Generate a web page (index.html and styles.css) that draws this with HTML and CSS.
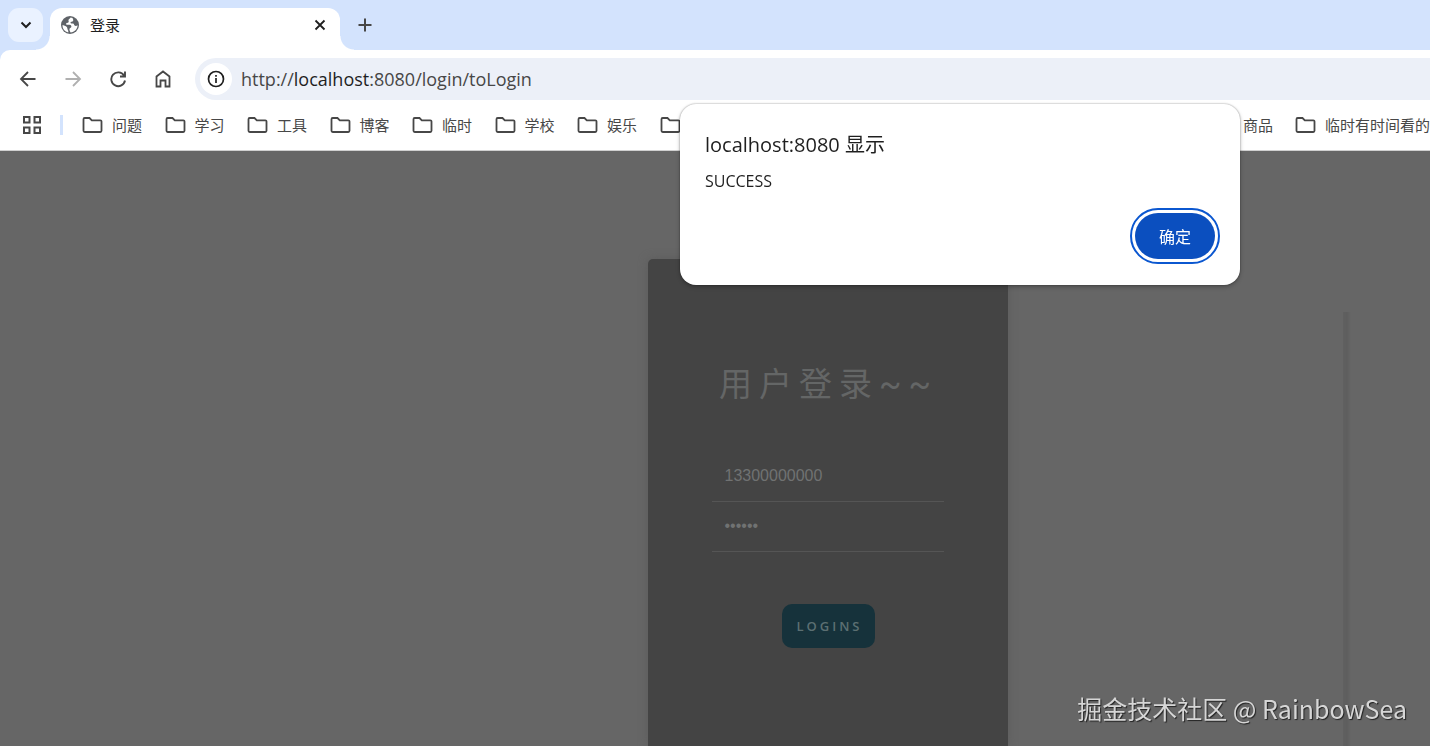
FILE: index.html
```html
<!DOCTYPE html>
<html lang="zh-CN">
<head>
    <meta charset="UTF-8">
    <meta name="viewport" content="width=device-width, initial-scale=1.0">
    <title>登录</title>
    <link rel="stylesheet" href="styles.css">
</head>
<body>
    <!-- shared icons -->
    <svg class="sprite" aria-hidden="true">
        <symbol id="folder" viewBox="0 0 21 18">
            <path d="M1.5 3.2a1.2 1.2 0 0 1 1.2-1.2h4.800l2.300 2.300h8.500a1.200 1.200 0 0 1 1.200 1.200v9.300a1.200 1.200 0 0 1-1.200 1.200H2.700a1.200 1.200 0 0 1-1.200-1.200z" fill="none" stroke="#474747" stroke-width="1.8"/>
        </symbol>
    </svg>

    <header class="browser">
        <div class="tab-strip">
            <button class="tab-search" aria-label="搜索标签页">
                <svg width="12" height="8" viewBox="0 0 12 8"><path d="M1.5 1.5L6 6l4.5-4.5" fill="none" stroke="#1f1f1f" stroke-width="2"/></svg>
            </button>
            <div class="tab">
                <svg width="20" height="20" viewBox="0 0 20 20">
                    <circle cx="10" cy="10" r="9" fill="#5f6368"/>
                    <path d="M10.6 2.4c-.5 1.5-1.8 1.3-2.1 2.5-.2 1 .7 1.7-.2 2.5-.8.6-1.6.2-2.1 1-.5.9.4 1.5 1.5 1.4 1.7-.1 3.6.1 3.7 1.6.1 1.3-1.5 1.2-1.9 2.3-.3 1 .3 2.5 1.1 3.9 3.8-.3 6.9-3.5 7-7.3-1 .8-2.2 1-3 .3-.7-.7-.5-1.7-1.6-2-1.1-.2-2.3.2-2.5-.9-.2-1.2 2.2-.7 2.7-1.9.3-.8-.2-2.1-.7-2.9a7.6 7.6 0 0 0-1.9-.5z" fill="#fff"/>
                    <path d="M2.4 10.3c1.3 0 3.4.5 4.4 1.7.8 1 .4 2.1 1.1 3.1.4.6.6 1.4.4 2.3a7.6 7.6 0 0 1-5.9-7.1z" fill="#fff"/>
                </svg>
                <span class="tab-title">登录</span>
                <button class="tab-close" aria-label="关闭">
                    <svg width="12" height="12" viewBox="0 0 12 12"><path d="M1.5 1.5l9 9m0-9l-9 9" stroke="#1f1f1f" stroke-width="1.8"/></svg>
                </button>
            </div>
            <button class="new-tab" aria-label="新标签页">
                <svg width="14" height="14" viewBox="0 0 14 14"><path d="M7 .5v13M.5 7h13" stroke="#474747" stroke-width="2"/></svg>
            </button>
        </div>

        <div class="toolbar">
            <nav class="nav-buttons">
                <button aria-label="后退">
                    <svg width="18" height="18" viewBox="0 0 18 18"><path d="M16.5 9H2.5M9 2L2 9l7 7" fill="none" stroke="#474747" stroke-width="1.8"/></svg>
                </button>
                <button aria-label="前进" disabled>
                    <svg width="18" height="18" viewBox="0 0 18 18"><path d="M1.5 9h14M9 2l7 7-7 7" fill="none" stroke="#b0b0b0" stroke-width="1.8"/></svg>
                </button>
                <button aria-label="重新加载">
                    <svg width="18" height="18" viewBox="0 0 18 18"><path d="M15 5.5A6.9 6.9 0 1 0 16 10.5M16 1.5v5h-5" fill="none" stroke="#474747" stroke-width="1.9"/></svg>
                </button>
                <button aria-label="主页">
                    <svg width="18" height="20" viewBox="0 0 18 20"><path d="M2.5 17.5v-10L9 2.5l6.5 5v10h-4v-6h-5v6z" fill="none" stroke="#474747" stroke-width="1.8"/></svg>
                </button>
            </nav>
            <div class="address-bar">
                <button class="site-info" aria-label="查看网站信息">
                    <svg width="18" height="18" viewBox="0 0 18 18"><circle cx="9" cy="9" r="7.5" fill="none" stroke="#1f1f1f" stroke-width="1.7"/><path d="M9 8v5M9 5v1.7" stroke="#1f1f1f" stroke-width="1.7"/></svg>
                </button>
                <div class="url" role="textbox" aria-label="地址和搜索栏" contenteditable="true" spellcheck="false">http://<span class="host">localhost</span>:8080/login/toLogin</div>
            </div>
        </div>

        <nav class="bookmarks">
            <button class="apps" aria-label="标签页分组">
                <svg width="20" height="20" viewBox="0 0 20 20"><path d="M2 2h5.5v5.5H2zM12.5 2H18v5.5h-5.5zM2 12.5h5.5V18H2zM12.5 12.5H18V18h-5.5z" fill="none" stroke="#474747" stroke-width="2"/></svg>
            </button>
            <span class="divider"></span>
            <div class="bookmark-list">
                <a class="bookmark" href="#"><svg><use href="#folder"/></svg>问题</a>
                <a class="bookmark" href="#"><svg><use href="#folder"/></svg>学习</a>
                <a class="bookmark" href="#"><svg><use href="#folder"/></svg>工具</a>
                <a class="bookmark" href="#"><svg><use href="#folder"/></svg>博客</a>
                <a class="bookmark" href="#"><svg><use href="#folder"/></svg>临时</a>
                <a class="bookmark" href="#"><svg><use href="#folder"/></svg>学校</a>
                <a class="bookmark" href="#"><svg><use href="#folder"/></svg>娱乐</a>
                <a class="bookmark" href="#" aria-label="文件夹"><svg><use href="#folder"/></svg></a>
            </div>
            <div class="bookmark-end">
                <a class="bookmark" href="#">商品</a>
                <a class="bookmark" href="#"><svg><use href="#folder"/></svg>临时有时间看的</a>
            </div>
        </nav>
    </header>

    <main class="page">
        <form class="login-card">
            <h1>用户登录~~</h1>
            <input class="field" type="text" aria-label="手机号" value="13300000000">
            <input class="field" type="password" aria-label="密码" value="123456">
            <button class="login-button" type="button">LOGINS</button>
        </form>
        <div class="side-shadow"></div>
    </main>

    <div class="alert" role="alertdialog" aria-labelledby="alert-title" aria-describedby="alert-text">
        <h2 id="alert-title">localhost:8080 显示</h2>
        <p id="alert-text">SUCCESS</p>
        <button class="alert-ok">确定</button>
    </div>

    <div class="watermark">掘金技术社区 @ RainbowSea</div>
</body>
</html>
```
FILE: styles.css
```css
* {
    box-sizing: border-box;
}
body {
    margin: 0;
    height: 100vh;
    display: flex;
    flex-direction: column;
    overflow: hidden;
    font-family: "Open Sans", "Noto Sans CJK SC", sans-serif;
    color: #1f1f1f;
}
button {
    display: flex;
    align-items: center;
    justify-content: center;
    padding: 0;
    border: none;
    background: none;
    font-family: inherit;
    cursor: pointer;
}
.sprite {
    position: absolute;
    width: 0;
    height: 0;
}

/* browser frame */
.browser {
    background: #d3e3fd;
    border-bottom: 1px solid #d0d0d0;
}
.tab-strip {
    display: flex;
    height: 50px;
    padding: 8px 8px 0;
}
.tab-search {
    width: 35px;
    height: 34px;
    margin-right: 7px;
    border-radius: 11px;
    background: #eaf2ff;
}
.tab {
    position: relative;
    display: flex;
    align-items: center;
    width: 290px;
    height: 42px;
    padding: 0 14px 8px 10px;
    border-radius: 12px 12px 0 0;
    background: #fff;
}
/* curved feet of the active tab */
.tab::before,
.tab::after {
    content: "";
    position: absolute;
    bottom: 0;
    width: 14px;
    height: 14px;
}
.tab::before {
    right: 100%;
    background: radial-gradient(circle at 0 0, transparent 13px, #fff 14px);
}
.tab::after {
    left: 100%;
    background: radial-gradient(circle at 100% 0, transparent 13px, #fff 14px);
}
.tab-title {
    margin-left: 10px;
    font-family: "Noto Sans CJK SC", sans-serif;
    font-size: 15px;
    line-height: 20px;
}
.tab-close {
    margin-left: auto;
}
.new-tab {
    width: 34px;
    height: 34px;
    margin-left: 8px;
}
.toolbar {
    display: flex;
    align-items: center;
    height: 50px;
    padding-top: 8px;
    padding-left: 5px;
    background: #fff;
    border-top-left-radius: 10px;
}
.nav-buttons {
    display: flex;
}
.nav-buttons button {
    width: 45px;
    height: 42px;
}
.address-bar {
    flex: 1;
    display: flex;
    align-items: center;
    height: 42px;
    margin-left: 10px;
    padding-left: 5px;
    border-radius: 21px 0 0 21px;
    background: #ecf0f8;
}
.site-info {
    width: 32px;
    height: 32px;
    border-radius: 50%;
    background: #fff;
}
.url {
    margin-left: 9px;
    font-size: 18px;
    color: #474747;
    outline: none;
    white-space: nowrap;
}
.host {
    color: #1f1f1f;
}
.bookmarks {
    display: flex;
    align-items: center;
    height: 50px;
    padding-left: 22px;
    background: #fff;
    overflow: hidden;
}
.divider {
    width: 3px;
    height: 20px;
    margin: 0 19px 0 18px;
    background: #d3e3fd;
}
.bookmark-list {
    display: grid;
    grid-template-columns: repeat(8, 1fr);
    width: 660px;
}
.bookmark {
    display: flex;
    align-items: center;
    font-family: "Noto Sans CJK SC", sans-serif;
    font-size: 15px;
    line-height: 20px;
    color: #474747;
    text-decoration: none;
    white-space: nowrap;
}
.bookmark svg {
    width: 21px;
    height: 18px;
    margin-right: 9px;
}
.bookmark-end {
    display: flex;
    gap: 22px;
    margin-left: auto;
}

/* dimmed page */
.page {
    flex: 1;
    min-height: 0;
    display: grid;
    grid-template-columns: 20fr 360px 13fr;
    background: #666;
}
.login-card {
    grid-column: 2;
    display: flex;
    flex-direction: column;
    align-items: center;
    margin-top: 108px;
    padding: 101px 64px 0;
    border-radius: 5px 5px 0 0;
    background: #444;
    box-shadow: 0 0 10px #5c5c5c;
}
.login-card h1 {
    margin: 0 0 42px;
    font-family: Roboto, "Noto Sans CJK SC", sans-serif;
    font-size: 33px;
    font-weight: 400;
    line-height: 50px;
    letter-spacing: 7px;
    white-space: nowrap;
    color: #646666;
}
.field {
    width: 100%;
    height: 50px;
    padding: 0 12px 2px;
    border: none;
    border-bottom: 1px solid #555;
    background: transparent;
    font-family: "Liberation Sans", Arial, sans-serif;
    font-size: 16px;
    color: #707272;
    outline: none;
}
.login-button {
    margin-top: 52px;
    padding: 0 12px 0 14px;
    height: 44px;
    border-radius: 10px;
    background: #16323b;
    font-size: 13px;
    font-weight: 600;
    letter-spacing: 3px;
    color: #5c6f72;
}
.side-shadow {
    justify-self: end;
    width: 8px;
    margin-top: 161px;
    margin-right: 79px;
    background: linear-gradient(to right, #606060, #5e5e5e, #666);
}

/* alert box over the page */
.alert {
    position: fixed;
    top: 104px;
    right: 190px;
    width: 560px;
    padding: 26px 25px;
    border-radius: 16px;
    background: #fff;
    box-shadow: 0 0 2px rgba(0, 0, 0, 0.4), 0 2px 4px rgba(0, 0, 0, 0.25);
}
.alert h2 {
    margin: 0;
    font-size: 20px;
    font-weight: 400;
    line-height: 30px;
}
.alert p {
    margin: 9px 0 20px;
    font-size: 16px;
    line-height: 24px;
}
.alert-ok {
    width: 80px;
    height: 46px;
    margin-left: auto;
    border-radius: 23px;
    background: #0b4fbf;
    outline: 2px solid #0b57d0;
    outline-offset: 3px;
    font-size: 16px;
    color: #fff;
}
.watermark {
    position: fixed;
    right: 23px;
    bottom: 20px;
    font-family: "Noto Sans CJK SC", sans-serif;
    font-size: 25px;
    line-height: 36px;
    color: #d6d6d6;
    text-shadow: 1px 1px 1px #222;
}
```
